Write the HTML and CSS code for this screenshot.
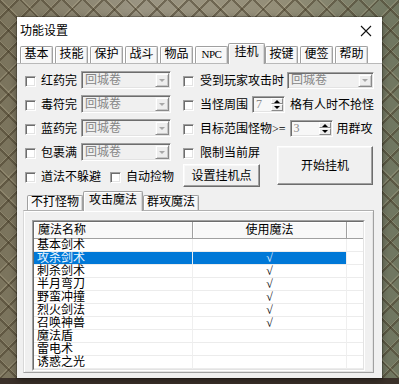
FILE: index.html
```html
<!DOCTYPE html>
<html lang="zh">
<head>
<meta charset="utf-8">
<title>功能设置</title>
<link rel="stylesheet" href="styles.css">
</head>
<body>
<div class="dialog">
  <div class="titlebar">
    <span class="title">功能设置</span>
    <svg class="close" width="12" height="12" viewBox="0 0 12 12"><path d="M1 1L11 11M11 1L1 11" stroke="#111" stroke-width="1.1" fill="none"/></svg>
  </div>
  <div class="tabs">
    <div class="tab">基本</div>
    <div class="tab">技能</div>
    <div class="tab">保护</div>
    <div class="tab">战斗</div>
    <div class="tab">物品</div>
    <div class="tab npc">NPC</div>
    <div class="tab sel">挂机</div>
    <div class="tab">按键</div>
    <div class="tab">便签</div>
    <div class="tab">帮助</div>
  </div>
  <div class="page">
    <div class="grid">
      <div class="cell lc"><span class="cb"></span><span class="lbl w3">红药完</span><div class="combo cl"><span class="ctext">回城卷</span><span class="drop"><i></i></span></div></div>
      <div class="cell rc wide"><span class="cb"></span><span class="lbl">受到玩家攻击时</span><div class="combo cr"><span class="ctext">回城卷</span><span class="drop"><i></i></span></div></div>

      <div class="cell lc"><span class="cb"></span><span class="lbl w3">毒符完</span><div class="combo cl"><span class="ctext">回城卷</span><span class="drop"><i></i></span></div></div>
      <div class="cell rc wide"><span class="cb"></span><span class="lbl">当怪周围</span><div class="spin s1"><span class="val">7</span><span class="arrows"><i class="up"></i><i class="dn"></i></span></div><span class="lbl after5">格有人时不抢怪</span></div>

      <div class="cell lc"><span class="cb"></span><span class="lbl w3">蓝药完</span><div class="combo cl"><span class="ctext">回城卷</span><span class="drop"><i></i></span></div></div>
      <div class="cell rc wide"><span class="cb"></span><span class="lbl">目标范围怪物&gt;=</span><div class="spin s2"><span class="val">3</span><span class="arrows"><i class="up"></i><i class="dn"></i></span></div><span class="lbl after4">用群攻</span></div>

      <div class="cell lc"><span class="cb"></span><span class="lbl w3">包裹满</span><div class="combo cl"><span class="ctext">回城卷</span><span class="drop"><i></i></span></div></div>
      <div class="cell rc"><span class="cb"></span><span class="lbl">限制当前屏</span></div>
      <div class="cell start"><button class="btn big">开始挂机</button></div>

      <div class="cell lc"><span class="cb"></span><span class="lbl">道法不躲避</span><span class="cb cb2"></span><span class="lbl">自动捡物</span></div>
      <div class="cell rc"><button class="btn setp">设置挂机点</button></div>
    </div>

    <div class="subtabs">
      <div class="stab">不打怪物</div>
      <div class="stab sel">攻击魔法</div>
      <div class="stab">群攻魔法</div>
    </div>
    <div class="subpanel">
      <div class="list">
        <div class="list-in">
          <div class="lhead"><div class="hc c1">魔法名称</div><div class="hc c2">使用魔法</div><div class="hc c3"></div></div>
          <div class="lrow"><div class="c1">基本剑术</div><div class="c2"></div><div class="c3"></div></div>
          <div class="lrow sel"><div class="c1">攻杀剑术</div><div class="c2">√</div><div class="c3"></div></div>
          <div class="lrow"><div class="c1">刺杀剑术</div><div class="c2">√</div><div class="c3"></div></div>
          <div class="lrow"><div class="c1">半月弯刀</div><div class="c2">√</div><div class="c3"></div></div>
          <div class="lrow"><div class="c1">野蛮冲撞</div><div class="c2">√</div><div class="c3"></div></div>
          <div class="lrow"><div class="c1">烈火剑法</div><div class="c2">√</div><div class="c3"></div></div>
          <div class="lrow"><div class="c1">召唤神兽</div><div class="c2">√</div><div class="c3"></div></div>
          <div class="lrow"><div class="c1">魔法盾</div><div class="c2"></div><div class="c3"></div></div>
          <div class="lrow"><div class="c1">雷电术</div><div class="c2"></div><div class="c3"></div></div>
          <div class="lrow"><div class="c1">诱惑之光</div><div class="c2"></div><div class="c3"></div></div>
        </div>
      </div>
    </div>
  </div>
</div>
</body>
</html>
```

FILE: styles.css
```css
html, body { margin: 0; padding: 0; }
body {
  width: 399px;
  height: 384px;
  overflow: hidden;
  box-sizing: border-box;
  padding-top: 17px;
  font-family: "Liberation Serif", "Noto Sans CJK SC", serif;
  font-size: 12px;
  color: #000;
  background:
    linear-gradient(to bottom, transparent 378px, #3a3029 378px),
    repeating-linear-gradient(45deg, rgba(70, 60, 40, 0.5) 0 2px, rgba(190, 180, 150, 0.25) 2px 3px, transparent 3px 15px),
    repeating-linear-gradient(-45deg, rgba(70, 60, 40, 0.5) 0 2px, rgba(190, 180, 150, 0.25) 2px 3px, transparent 3px 15px),
    linear-gradient(to right, #7a735c 0, #9a9482 35%, #948e78 70%, #6f7660 100%);
}
.dialog {
  margin-left: 17px;
  width: 365px;
  height: 361px;
  background: #f0f0f0;
  box-shadow: 0 0 0 1px rgba(0, 0, 0, 0.2), 0 2px 8px rgba(0, 0, 0, 0.4);
  overflow: hidden;
  display: flex;
  flex-direction: column;
}
.titlebar {
  height: 26px;
  flex: none;
  background: #fff;
  display: flex;
  align-items: center;
  padding-left: 3px;
  box-sizing: border-box;
}
.title { line-height: 14px; margin-top: 2px; }
.close { margin-left: auto; margin-right: 10px; margin-top: 2px; }

.tabs {
  height: 20px;
  flex: none;
  background: #fff;
  display: flex;
  align-items: flex-end;
  gap: 2px;
  padding-left: 3px;
}
.tab {
  width: 33px;
  height: 17px;
  box-sizing: border-box;
  border: 1px solid #a0a0a0;
  border-bottom: 0;
  border-radius: 2px 2px 0 0;
  background: #f7f7f7;
  box-shadow: inset 1px 1px #fff, inset -1px 0 #d6d6d6;
  text-align: center;
  line-height: 15px;
  flex: none;
}
.tab.npc { font-size: 11px; letter-spacing: -0.5px; }
.tab.sel {
  width: 37px;
  height: 21px;
  margin: 0 -2px -1px;
  position: relative;
  z-index: 1;
  background: #f0f0f0;
  line-height: 17px;
}

.page {
  flex: 1;
  border-top: 1px solid #b9b9b9;
  padding: 4px 8px 0 6px;
}
.grid {
  margin-left: 2px;
  display: grid;
  grid-template-columns: 158px 94px 96px;
  grid-auto-rows: 24px;
}
.cell { display: flex; align-items: center; white-space: nowrap; }
.wide { grid-column: span 2; }
.start { grid-row: span 2; align-items: flex-start; }

.cb {
  width: 11px;
  height: 11px;
  flex: none;
  box-sizing: border-box;
  border: 1px solid;
  border-color: #a0a0a0 #fff #fff #a0a0a0;
  box-shadow: inset 1px 1px #6d6d6d, inset -1px -1px #e3e3e3;
  background: #fff;
  margin-right: 5px;
  margin-top: 2px;
}
.rc .cb { margin-right: 6px; }
.cb2 { margin-left: 9px; }
.lbl { line-height: 14px; margin-top: 1px; }
.w3 { width: 36px; }
.after5 { margin-left: 5px; }
.after4 { margin-left: 4px; }

.combo {
  height: 18px;
  box-sizing: border-box;
  border: 1px solid;
  border-color: #a0a0a0 #fff #fff #a0a0a0;
  box-shadow: inset 1px 1px #6d6d6d, inset -1px -1px #e3e3e3;
  background: #f0f0f0;
  display: flex;
  align-items: center;
  color: #858585;
  padding-left: 3px;
  flex: none;
}
.cl { width: 90px; margin-left: 4px; }
.cr { width: 87px; height: 17px; margin-left: 3px; }
.ctext { line-height: 14px; }
.drop {
  margin-left: auto;
  margin-right: 1px;
  width: 14px;
  height: 14px;
  box-sizing: border-box;
  border: 1px solid;
  border-color: #f4f4f4 #8a8a8a #8a8a8a #f4f4f4;
  box-shadow: inset 1px 1px #fff, inset -1px -1px #c8c8c8;
  background: #eeeeee;
  display: flex;
  align-items: center;
  justify-content: center;
}
.cr .drop { height: 13px; }
.drop i {
  display: block;
  width: 0;
  height: 0;
  border-left: 3px solid transparent;
  border-right: 3px solid transparent;
  border-top: 3px solid #a8a8a8;
  margin-top: 1px;
}

.spin {
  height: 17px;
  box-sizing: border-box;
  border: 1px solid;
  border-color: #a0a0a0 #fff #fff #a0a0a0;
  box-shadow: inset 1px 1px #6d6d6d, inset -1px -1px #e3e3e3;
  background: #f7f7f7;
  display: flex;
  align-items: center;
  color: #8a8a8a;
  padding-left: 3px;
  flex: none;
  margin-left: 4px;
}
.s1 { width: 33px; }
.s2 { width: 43px; }
.val { line-height: 13px; }
.arrows {
  margin-left: auto;
  margin-right: 1px;
  width: 12px;
  height: 13px;
  display: flex;
  flex-direction: column;
}
.arrows i {
  flex: 1;
  box-sizing: border-box;
  border: 1px solid;
  border-color: #fff #8a8a8a #8a8a8a #fff;
  background: #ececec;
  position: relative;
}
.arrows i::after {
  content: "";
  position: absolute;
  left: 2px;
  width: 0;
  height: 0;
  border-left: 3px solid transparent;
  border-right: 3px solid transparent;
}
.arrows .up::after { top: 1px; border-bottom: 3px solid #000; }
.arrows .dn::after { top: 1px; border-top: 3px solid #000; }

.btn {
  font: inherit;
  color: #000;
  padding: 0;
  box-sizing: border-box;
  border: 1px solid;
  border-color: #fff #6d6d6d #6d6d6d #fff;
  box-shadow: inset -1px -1px #a0a0a0, inset 1px 1px #f8f8f8;
  background: #f0f0f0;
  line-height: 14px;
}
.big { width: 96px; height: 39px; margin-top: 6px; }
.setp { width: 77px; height: 23px; margin-top: -1px; }

.subtabs {
  margin-top: 3px;
  height: 19px;
  display: flex;
  align-items: flex-end;
  gap: 2px;
  padding-left: 4px;
}
.stab {
  width: 56px;
  height: 15px;
  box-sizing: border-box;
  border: 1px solid #a0a0a0;
  border-bottom: 0;
  border-radius: 2px 2px 0 0;
  background: #f7f7f7;
  box-shadow: inset 1px 1px #fff, inset -1px 0 #d6d6d6;
  text-align: center;
  line-height: 13px;
  flex: none;
}
.stab.sel {
  width: 60px;
  height: 20px;
  margin: 0 -2px -1px;
  position: relative;
  z-index: 1;
  background: #f0f0f0;
  line-height: 17px;
}
.subpanel {
  height: 163px;
  box-sizing: border-box;
  border: 1px solid;
  border-color: #b0b0b0 #a0a0a0 #a0a0a0 #d8d8d8;
  box-shadow: inset 1px 1px #fff, inset -1px -1px #e3e3e3;
  padding: 9px 0 0 8px;
}
.list {
  width: 333px;
  box-sizing: border-box;
  border: 1px solid;
  border-color: #a0a0a0 #fff #fff #a0a0a0;
  background: #fff;
}
.list-in {
  border: 1px solid;
  border-color: #6d6d6d #e3e3e3 #e3e3e3 #6d6d6d;
  background: #fff;
}
.lhead, .lrow {
  display: grid;
  grid-template-columns: 159px 154px 16px;
}
.hc {
  height: 17px;
  box-sizing: border-box;
  border-bottom: 1px solid #a0a0a0;
  border-right: 1px solid #a0a0a0;
  box-shadow: inset 1px 1px #fff;
  background: #f8f8f8;
  line-height: 16px;
}
.hc.c1 { padding-left: 4px; }
.hc.c2 { text-align: center; }
.hc.c3 { border-right: 0; }
.lrow > div {
  height: 13px;
  box-sizing: border-box;
  border-bottom: 1px solid #ececec;
  line-height: 12px;
  white-space: nowrap;
}
.lrow .c1 { padding-left: 3px; border-right: 1px solid #efefef; }
.lrow .c2 { text-align: center; border-right: 1px solid #efefef; }
.lrow.sel .c1, .lrow.sel .c2 { background: #0078d7; color: #eaf6ff; }
```
